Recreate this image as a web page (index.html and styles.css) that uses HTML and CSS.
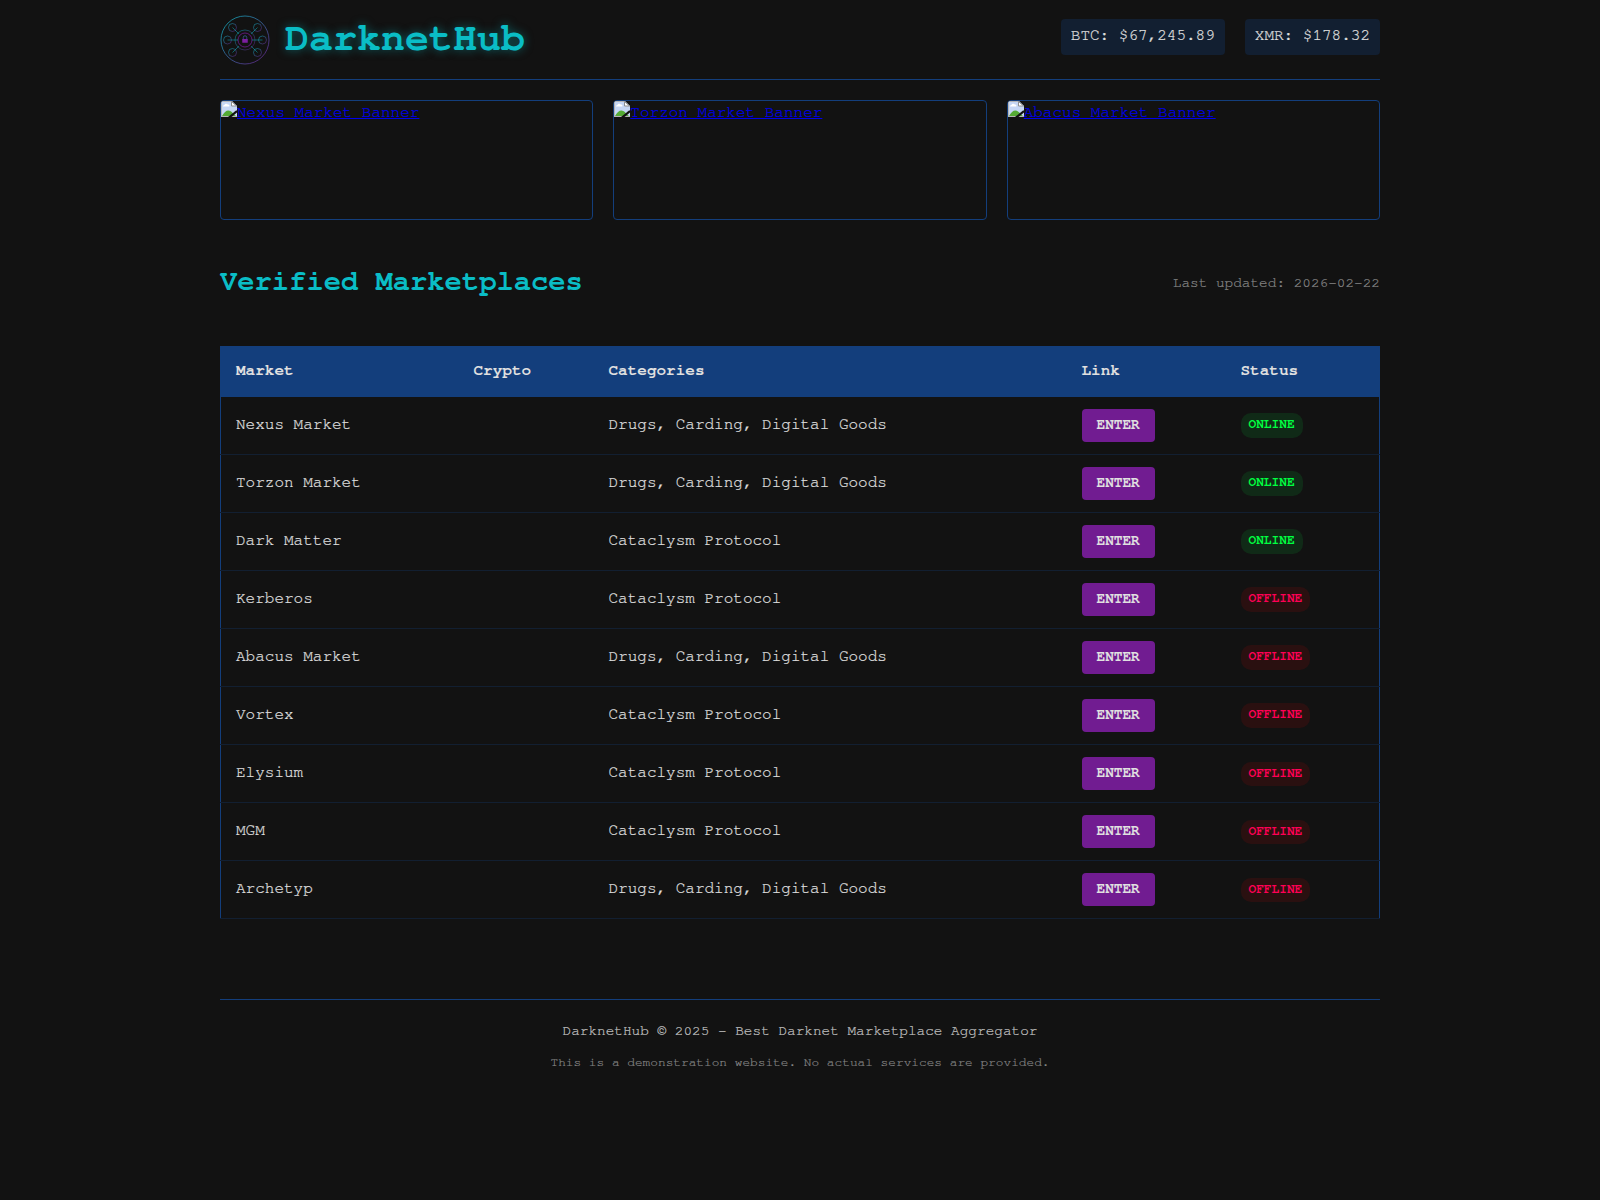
FILE: index.html
```
<!DOCTYPE html>
<html lang="en">
<head>
    <meta charset="UTF-8">
    <meta name="viewport" content="width=device-width, initial-scale=1.0">
    <title>DarknetHub</title>
    <link rel="stylesheet" href="styles.css">
</head>
<body>
    <svg width="0" height="0" class="defs">
        <symbol id="broken" viewBox="0 0 16 16">
            <path d="M0 0H11L16 5V16H0Z" fill="#c6d7f5"/>
            <path d="M0.5 16V0.5H11" fill="none" stroke="#b5b5b5"/>
            <path d="M10.5 0.5L15.5 5H10.5Z" fill="#fff" stroke="#8f8f8f"/>
            <path d="M2 5.5C2 4 3.3 4 3.6 3.7C4 2.4 6 2.2 6.8 3.6C8.5 3.3 9 5.5 8 5.5Z" fill="#fff"/>
            <path d="M1 15C3 11.5 5 9.5 7.5 9.5C10 9.5 12 12.5 15 15Z" fill="#55ab35"/>
            <path d="M0 15.5H16" stroke="#b5b5b5"/>
            <path d="M7 16L15 9.5H16V11.5L10.5 16Z" fill="#121212"/>
        </symbol>
    </svg>
    <div class="container">
        <header>
            <div class="logo">
                <svg class="logo-img" viewBox="0 0 100 100">
                    <defs>
                        <linearGradient id="grad" x1="0" y1="0" x2="1" y2="1">
                            <stop offset="0" stop-color="#0abdc6"/>
                            <stop offset="1" stop-color="#711c91"/>
                        </linearGradient>
                    </defs>
                    <circle cx="50" cy="50" r="48" fill="none" stroke="url(#grad)" stroke-width="1.5"/>
                    <g fill="none">
                        <circle cx="50" cy="50" r="20" stroke="url(#grad)" stroke-width="1.5" stroke-opacity="0.6"/>
                        <circle cx="50" cy="50" r="14" stroke="#711c91" stroke-width="2" stroke-opacity="0.8"/>
                    </g>
                    <g fill="none" stroke="url(#grad)" stroke-width="1.5" stroke-opacity="0.7">
                        <circle cx="25" cy="25" r="8"/>
                        <circle cx="75" cy="25" r="8"/>
                        <circle cx="15" cy="50" r="8"/>
                        <circle cx="85" cy="50" r="8"/>
                        <circle cx="25" cy="75" r="8"/>
                        <circle cx="75" cy="75" r="8"/>
                    </g>
                    <path d="M25 25L38 38M75 25L62 38M15 50H36M85 50H64M25 75L38 62M75 75L62 62" stroke="#0abdc6" stroke-opacity="0.75" stroke-width="1.3"/>
                    <path d="M46.5 49V45a3.5 3.5 0 0 1 7 0V49" fill="none" stroke="#3d5c9c" stroke-width="1.5"/>
                    <rect x="44.5" y="48" width="11" height="7.5" fill="#7d1fa1"/>
                </svg>
                <h1>DarknetHub</h1>
            </div>
            <div class="crypto-prices">
                <div class="price">BTC: $67,245.89</div>
                <div class="price">XMR: $178.32</div>
            </div>
        </header>

        <div class="banners">
            <div class="banner"><a href="#"><svg><use href="#broken"/></svg><span>Nexus Market Banner</span></a></div>
            <div class="banner"><a href="#"><svg><use href="#broken"/></svg><span>Torzon Market Banner</span></a></div>
            <div class="banner"><a href="#"><svg><use href="#broken"/></svg><span>Abacus Market Banner</span></a></div>
        </div>

        <div class="section-header">
            <h2>Verified Marketplaces</h2>
            <div class="last-updated">Last updated: 2026-02-22</div>
        </div>

        <table>
            <colgroup>
                <col class="col-market">
                <col class="col-crypto">
                <col class="col-categories">
                <col class="col-link">
                <col>
            </colgroup>
            <thead>
                <tr>
                    <th>Market</th>
                    <th>Crypto</th>
                    <th>Categories</th>
                    <th>Link</th>
                    <th>Status</th>
                </tr>
            </thead>
            <tbody>
                <tr>
                    <td>Nexus Market</td>
                    <td></td>
                    <td>Drugs, Carding, Digital Goods</td>
                    <td class="link"><a href="#" class="enter-btn">ENTER</a></td>
                    <td><span class="status online">ONLINE</span></td>
                </tr>
                <tr>
                    <td>Torzon Market</td>
                    <td></td>
                    <td>Drugs, Carding, Digital Goods</td>
                    <td class="link"><a href="#" class="enter-btn">ENTER</a></td>
                    <td><span class="status online">ONLINE</span></td>
                </tr>
                <tr>
                    <td>Dark Matter</td>
                    <td></td>
                    <td>Cataclysm Protocol</td>
                    <td class="link"><a href="#" class="enter-btn">ENTER</a></td>
                    <td><span class="status online">ONLINE</span></td>
                </tr>
                <tr>
                    <td>Kerberos</td>
                    <td></td>
                    <td>Cataclysm Protocol</td>
                    <td class="link"><a href="#" class="enter-btn">ENTER</a></td>
                    <td><span class="status offline">OFFLINE</span></td>
                </tr>
                <tr>
                    <td>Abacus Market</td>
                    <td></td>
                    <td>Drugs, Carding, Digital Goods</td>
                    <td class="link"><a href="#" class="enter-btn">ENTER</a></td>
                    <td><span class="status offline">OFFLINE</span></td>
                </tr>
                <tr>
                    <td>Vortex</td>
                    <td></td>
                    <td>Cataclysm Protocol</td>
                    <td class="link"><a href="#" class="enter-btn">ENTER</a></td>
                    <td><span class="status offline">OFFLINE</span></td>
                </tr>
                <tr>
                    <td>Elysium</td>
                    <td></td>
                    <td>Cataclysm Protocol</td>
                    <td class="link"><a href="#" class="enter-btn">ENTER</a></td>
                    <td><span class="status offline">OFFLINE</span></td>
                </tr>
                <tr>
                    <td>MGM</td>
                    <td></td>
                    <td>Cataclysm Protocol</td>
                    <td class="link"><a href="#" class="enter-btn">ENTER</a></td>
                    <td><span class="status offline">OFFLINE</span></td>
                </tr>
                <tr>
                    <td>Archetyp</td>
                    <td></td>
                    <td>Drugs, Carding, Digital Goods</td>
                    <td class="link"><a href="#" class="enter-btn">ENTER</a></td>
                    <td><span class="status offline">OFFLINE</span></td>
                </tr>
            </tbody>
        </table>

        <footer>
            <p>DarknetHub © 2025 - Best Darknet Marketplace Aggregator</p>
            <p class="disclaimer">This is a demonstration website. No actual services are provided.</p>
        </footer>
    </div>
</body>
</html>
```
FILE: styles.css
```
:root {
    --bg: #121212;
    --text: #e0e0e0;
    --cyan: #0abdc6;
    --blue: #133e7c;
    --blue-dim: rgba(19, 62, 124, 0.3);
    --purple: #711c91;
}
* {
    margin: 0;
    padding: 0;
    box-sizing: border-box;
}
body {
    font-family: 'FreeMono', 'Liberation Mono', monospace;
    font-size: 16px;
    line-height: 1.6;
    background-color: var(--bg);
    color: var(--text);
    -webkit-text-stroke: 0.2px;
}
h1, h2, th, .enter-btn, .status {
    -webkit-text-stroke: 0;
}
.defs {
    display: block;
}
.container {
    max-width: 1200px;
    margin: 0 auto;
    padding: 0 20px;
}
header {
    display: flex;
    justify-content: space-between;
    align-items: flex-start;
    height: 80px;
    border-bottom: 1px solid var(--blue);
}
.logo {
    display: flex;
    align-items: center;
    gap: 15px;
    padding-top: 6px;
}
.logo-img {
    width: 50px;
    height: 50px;
    margin-top: 4px;
}
h1 {
    font-size: 40px;
    color: var(--cyan);
    text-shadow: 0 0 10px rgba(10, 189, 198, 0.5);
}
.crypto-prices {
    display: flex;
    gap: 20px;
    padding-top: 19px;
}
.price {
    padding: 4px 10px 6px;
    background-color: var(--blue-dim);
    border-radius: 4px;
}
.banners {
    display: grid;
    grid-template-columns: repeat(3, 1fr);
    gap: 20px;
    margin: 20px 0 40px;
}
.banner {
    height: 120px;
    border: 1px solid var(--blue);
    border-radius: 4px;
    overflow: hidden;
}
.banner a {
    display: flex;
    color: #0000ee;
    text-decoration-thickness: 1px;
}
.banner svg {
    width: 16px;
    height: 16px;
}
.banner span {
    margin-top: -1px;
}
.section-header {
    display: flex;
    justify-content: space-between;
    align-items: center;
    margin-top: -1px;
    margin-bottom: 41px;
}
h2 {
    font-size: 28.8px;
    color: var(--cyan);
}
.last-updated {
    font-size: 14.4px;
    color: #888;
}
table {
    width: 100%;
    table-layout: fixed;
    border-collapse: collapse;
    border: 1px solid var(--blue);
    margin-bottom: 80px;
}
.col-market {
    width: 238px;
}
.col-crypto {
    width: 135px;
}
.col-categories {
    width: 473px;
}
.col-link {
    width: 159px;
}
th {
    padding: 11px 15px 13px;
    text-align: left;
    background-color: var(--blue);
}
td {
    padding: 11.3px 15px 12.7px;
    border-bottom: 1px solid var(--blue-dim);
}
td.link {
    padding: 12px 15px;
}
.enter-btn {
    display: inline-block;
    padding: 4px 15px 6px;
    font-size: 14.4px;
    font-weight: bold;
    color: var(--text);
    background-color: var(--purple);
    border-radius: 4px;
    text-decoration: none;
}
.status {
    display: inline-block;
    padding: 2px 8px;
    font-size: 12.8px;
    font-weight: bold;
    border-radius: 10px;
}
.online {
    color: #00ff41;
    background-color: rgba(0, 255, 65, 0.1);
}
.offline {
    color: #ff0055;
    background-color: rgba(255, 0, 0, 0.1);
}
footer {
    padding: 19px 0 20px;
    border-top: 1px solid var(--blue);
    text-align: center;
    font-size: 14.4px;
    color: #c4c4c4;
}
.disclaimer {
    margin-top: 11px;
    font-size: 12.8px;
    color: #888;
}
```
